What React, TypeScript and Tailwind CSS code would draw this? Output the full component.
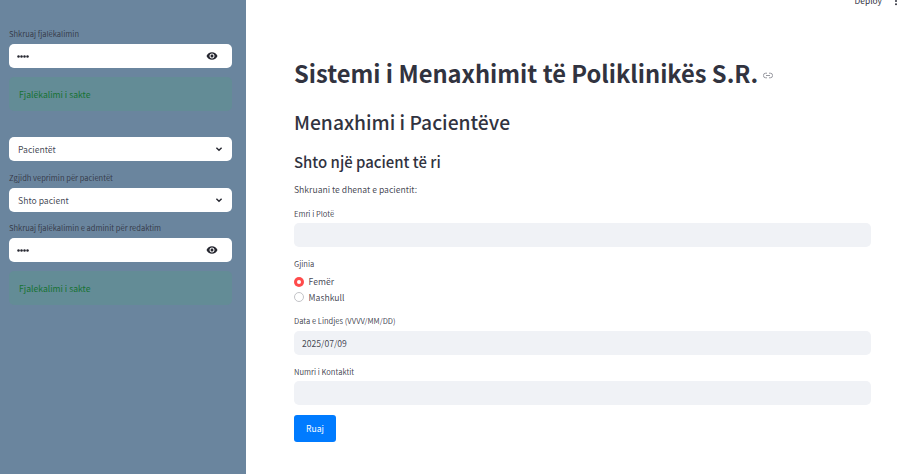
import React from "react";

const fontStack = "font-['Noto_Sans_CJK_SC','Source_Sans_Pro','Noto_Sans',sans-serif]";

function Eye() {
  return (
    <svg className="h-[12px] w-[12px]" viewBox="0 0 24 24" fill="#262730">
      <path d="M12 4.5C7 4.5 2.73 7.61 1 12c1.73 4.39 6 7.5 11 7.5s9.27-3.11 11-7.5c-1.73-4.39-6-7.5-11-7.5zM12 17c-2.76 0-5-2.24-5-5s2.24-5 5-5 5 2.24 5 5-2.24 5-5 5zm0-8c-1.66 0-3 1.34-3 3s1.34 3 3 3 3-1.34 3-3-1.34-3-3-3z" />
    </svg>
  );
}

function Label({ children }: { children: React.ReactNode }) {
  return <div className="h-[14px] text-[7.56px] leading-[14px] whitespace-nowrap text-[#31333f]/90">{children}</div>;
}

function PasswordField() {
  return (
    <div className="flex h-6 items-center justify-between rounded-[5px] bg-white pr-[14px] pl-[8px]">
      <div className="flex">
        {[0, 1, 2, 3].map((i) => (
          <svg key={i} className="h-[3px] w-[3px]" viewBox="0 0 3 3">
            <circle cx="1.5" cy="1.5" r="1.25" fill="#262730" />
          </svg>
        ))}
      </div>
      <Eye />
    </div>
  );
}

function Select({ value }: { value: string }) {
  return (
    <div className="flex h-6 items-center justify-between rounded-[5px] bg-white pr-[9px] pl-[9px] text-[8.65px] leading-[14px]">
      <span className="text-[#31333f]/90">{value}</span>
      <svg className="h-[8px] w-[8px]" viewBox="0 0 8 8" fill="none" stroke="#262730" strokeWidth="1.4">
        <path d="M1.4 2.8 4 5.3 6.6 2.8" />
      </svg>
    </div>
  );
}

function Success({ children }: { children: React.ReactNode }) {
  return (
    <div className="flex h-[34px] items-center rounded-[5px] bg-[#638c96] px-[10px] text-[8.65px] text-[#177233]">
      {children}
    </div>
  );
}

function Field({ value }: { value?: string }) {
  return (
    <div className="flex h-6 items-center rounded-[5px] bg-[#f0f2f6] px-2 text-[8.6px] leading-[14px] text-[#31333f]/90">{value}</div>
  );
}

export default function App() {
  return (
    <div className={`flex h-[474px] w-[899px] overflow-hidden bg-white text-[#31333f] ${fontStack}`}>
      <aside className="w-[246px] shrink-0 bg-[#6a859e] pt-[27px] pr-[14px] pl-[9px]">
        <Label>Shkruaj fjalëkalimin</Label>
        <div className="mt-[3px]"><PasswordField /></div>
        <div className="mt-[9px]"><Success>Fjalëkalimi i sakte</Success></div>
        <div className="mt-[26px]"><Select value="Pacientët" /></div>
        <div className="mt-[10px]"><Label>Zgjidh veprimin për pacientët</Label></div>
        <div className="mt-[3px]"><Select value="Shto pacient" /></div>
        <div className="mt-[9px]"><Label>Shkruaj fjalëkalimin e adminit për redaktim</Label></div>
        <div className="mt-[3px]"><PasswordField /></div>
        <div className="mt-[9px]"><Success>Fjalekalimi i sakte</Success></div>
      </aside>

      <main className="flex grow flex-col">
        <header className="flex h-[8px] items-start justify-end pr-[1px]">
          <span className="-mt-[7px] text-[8.4px] leading-[14px]">Deploy</span>
          <svg className="-mt-[4px] ml-[12px] h-[10px] w-[4px]" viewBox="0 0 4 10" fill="#31333f">
            <circle cx="2" cy="1.5" r="1" />
            <circle cx="2" cy="5" r="1" />
            <circle cx="2" cy="8.2" r="1" />
          </svg>
        </header>
        <div className="mt-[49px] flex flex-col pr-[28px] pl-[48px]">
          <div className="flex h-[32px] items-center">
            <h1 className="text-[23.7px] leading-[32px] font-bold whitespace-nowrap">Sistemi i Menaxhimit të Poliklinikës S.R.</h1>
            <svg className="mt-[5px] ml-[5px] h-[7px] w-[10px]" viewBox="0 0 10 7" fill="none" stroke="#8c8d95" strokeWidth="0.9">
              <path d="M6 1.2h1.3a2.3 2.3 0 0 1 0 4.6H6M4 5.8H2.7a2.3 2.3 0 0 1 0-4.6H4M3 3.5h4" />
            </svg>
          </div>
          <h2 className="mt-[19px] h-[28px] text-[19.25px] leading-[28px] font-medium whitespace-nowrap">Menaxhimi i Pacientëve</h2>
          <h3 className="mt-[15px] h-[22px] text-[14.95px] leading-[22px] font-medium whitespace-nowrap">Shto një pacient të ri</h3>
          <p className="mt-[9px] h-[14px] text-[8.6px] leading-[14px] text-[#31333f]/90">Shkruani te dhenat e pacientit:</p>
          <div className="mt-[11px]"><Label>Emri i Plotë</Label></div>
          <div className="mt-[2px]"><Field /></div>
          <div className="mt-[10px]"><Label>Gjinia</Label></div>
          <div className="mt-[3px] flex flex-col text-[8.6px] text-[#31333f]/90">
            <div className="flex h-[16px] items-center gap-[5px] leading-[15px]">
              <span className="flex h-[9.6px] w-[9.6px] items-center justify-center rounded-full bg-[#ff4b4b]">
                <span className="h-[3.6px] w-[3.6px] rounded-full bg-white" />
              </span>
              <span className="-mt-px">Femër</span>
            </div>
            <div className="-mt-px flex h-[16px] items-center gap-[5px] leading-[16px]">
              <span className="h-[9.6px] w-[9.6px] rounded-full border border-[#c3c4c8] bg-white" />
              <span>Mashkull</span>
            </div>
          </div>
          <div className="mt-[9px]"><Label>Data e Lindjes (VVVV/MM/DD)</Label></div>
          <div className="mt-[3px]"><Field value="2025/07/09" /></div>
          <div className="mt-[10px]"><Label>Numri i Kontaktit</Label></div>
          <div className="mt-[2px]"><Field /></div>
          <button className="mt-[10px] h-[27px] w-[42px] rounded-[3px] bg-[#007bff] text-[8.65px] text-white">Ruaj</button>
        </div>
      </main>
    </div>
  );
}
